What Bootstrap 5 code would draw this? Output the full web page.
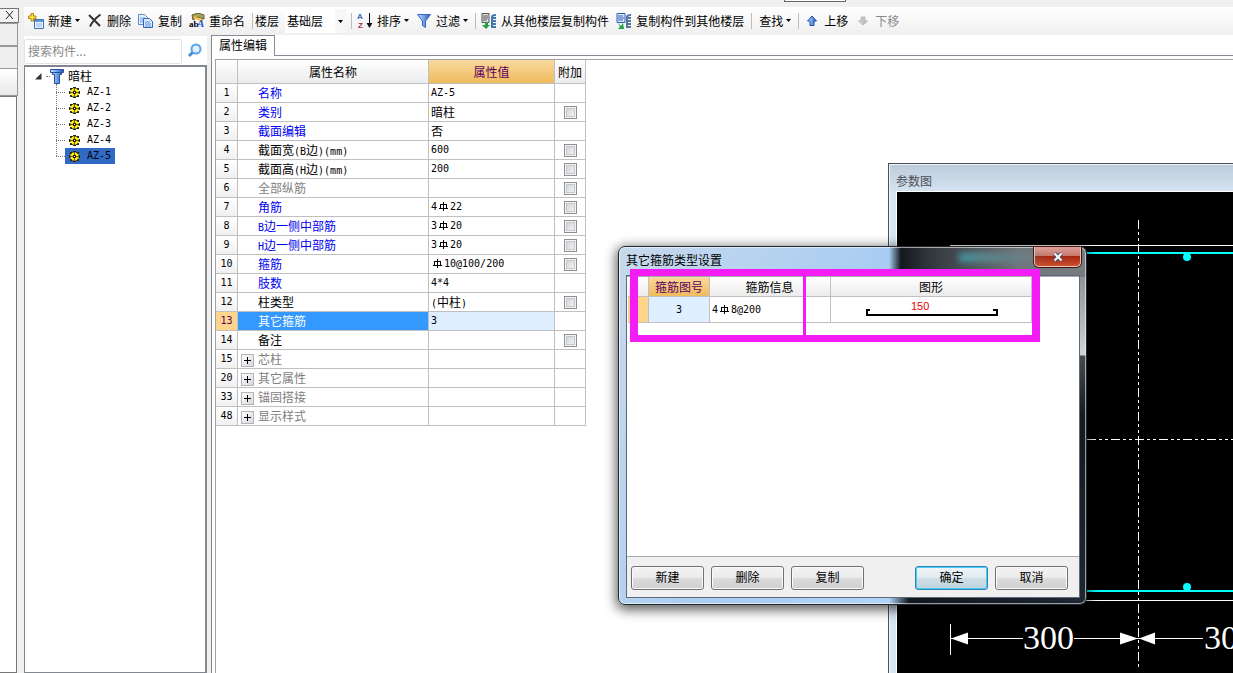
<!DOCTYPE html>
<html lang="zh-CN">
<head>
<meta charset="utf-8">
<meta name="viewport" content="width=device-width, initial-scale=1">
<title>属性编辑</title>
<link href="https://cdn.jsdelivr.net/npm/bootstrap@5.3.0/dist/css/bootstrap.min.css" rel="stylesheet">
<style>
body{font:12px/16px "Noto Sans CJK SC",sans-serif;color:#000;background:#f0f0f0;height:100vh;overflow:hidden;position:relative}
.mono{font-family:"DejaVu Sans Mono",monospace;font-size:10px}
span.mono{line-height:10px}
button{font:inherit;color:inherit}
/* left dock strip */
.dock{width:18px;flex:none}
.dock-x{width:19px;height:15px;margin-top:8px;border:1px solid #777;border-left:0;background:#f4f4f4;padding:0}
.dock-x svg{display:block;margin-left:5px}
.dock-cell{height:23px;border:1px solid #999;border-left:0;background:#efefef}
.dock-cell.tall{height:27px;border-top:0;background:linear-gradient(#fff,#e9e9e9)}
.dock-list{width:17px;background:#fff;border:1px solid #777;border-left:0}
.work{min-width:0;margin-left:2px}
/* toolbar */
.topband{height:7px;background:#f0f0f0;position:relative}
.topband i{position:absolute;left:764px;top:0;width:62px;height:2px;background:#fff;border:1px solid #666;border-top:0}
.tools{height:28px;background:linear-gradient(#fff,#efefef);padding-bottom:1px}
.tool{border:0;background:none;padding:0;margin-right:7px;gap:4px;white-space:nowrap;flex:none}
.tool:disabled{color:#8a8a8a}
.caret{width:5px;height:3px;flex:none;margin-left:-1px}
.vsep{width:1px;height:16px;background:#bdbdbd;margin-right:5px;flex:none}
.vsep.snug{margin-right:2px}
.vsep.wide{margin-right:7px}
.pick-label{margin-right:6px;flex:none}
.pick{appearance:none;border:0;border-radius:0;width:61px;height:24px;padding:0 2px;font:inherit;color:#000;margin-right:5px;flex:none;background:url("data:image/svg+xml,%3Csvg xmlns='http://www.w3.org/2000/svg' width='11' height='24'%3E%3Cpath fill='%23f7f7f7' d='M0 0h11v24H0z'/%3E%3Cpath d='M3 11h5L5.500 14z'/%3E%3C/svg%3E") right no-repeat #fff}
/* component tree */
.side{width:183px;flex:none;margin-top:1px}
.find-row{height:29px}
.find{width:158px;height:25px;border:1px solid #dfe3e8;border-radius:2px;margin-top:2px;padding:0 0 3px 3px;font:inherit;background:#fff}
.find::placeholder{color:#8a8a8a;opacity:1}
.look{border:0;background:none;padding:0;margin-left:5px}
.treebox{background:#fff;border:1px solid #838790;border-top-width:2px;border-right-width:2px;padding-top:1px}
.tree-root{height:16px;padding-left:10px}
.dots{width:4px;border-top:1px dotted #777}
.branch{list-style:none;margin:0 0 0 31px;padding:0;position:relative}
.branch::before{content:"";position:absolute;left:0;top:0;height:72px;border-left:1px dotted #777}
.branch li{height:16px}
.branch li::before{content:"";width:9px;border-top:1px dotted #777}
.leaf{color:#000;text-decoration:none;height:16px;padding:0 4px;gap:7px}
.leaf.on{background:#316ac5}
/* property editor */
.editor{border-left:1px solid #838790;margin-left:4px;background:#fff}
.tabs{height:21px;background:#fff}
.tabbtn{border:1px solid #8c8a98;border-width:1px 1px 0 0;background:#fff;padding:0 7px 2px;width:63px;white-space:nowrap}
.tabs-rest{border-bottom:1px solid #8c8a98}
.sheetbox{margin:3px 0 0 3px;border:1px solid #a0a0a0;border-width:1px 0 0 1px}
.grid{border-collapse:separate;border-spacing:0;table-layout:fixed}
.grid td,.grid th{border:solid #c0c0c0;border-width:0 1px 1px 0;padding:0;font-weight:400;white-space:nowrap;overflow:hidden}
.grid thead th{text-align:center;background:linear-gradient(#fff,#ececec)}
.grid thead th.hot{background:linear-gradient(#f9d99f,#efbb5c);color:#5c0060}
.grid tbody th{text-align:center;background:linear-gradient(#fff,#f0f0f0)}
.props{width:370px}
.props thead tr{height:24px}
.props tbody tr{height:19px}
.props td,.props tbody th{line-height:18px}
.props td:nth-child(2){padding-left:20px}
.props td:nth-child(3){padding-left:2px}
.props .key{color:#0000f0}
.props .dim{color:#808080}
.props td.group{padding-left:3px}
.props tr.cur th{background:#ffd58c;color:#5c0060}
.props tr.cur td:nth-child(2){background:#3399ff;color:#fff}
.props tr.cur td:nth-child(3){background:#e0efff}
.tick{appearance:none;width:13px;height:13px;border:1px solid #8e8f8f;background:linear-gradient(135deg,#cdd1d6,#f6f6f6);box-shadow:inset 0 0 0 1px #f4f4f4,inset 0 0 0 2px #c4c8cc;margin:0 auto;display:block}
.plus{width:13px;height:13px;border:1px solid #b5b5b5;background:linear-gradient(135deg,#fff,#d4d8de);padding:0;margin-right:4px;vertical-align:middle;display:inline-flex}
.rebar{vertical-align:-1px;margin:0 2px}
/* floating windows */
.chart-win{position:absolute;left:888px;top:163px;right:0;bottom:0;border:1px solid #4a4f55;border-width:1px 0 0 1px;background:#d7e4f2;padding-left:7px;box-shadow:inset 1px 1px #f3f8fd}
.chart-cap{height:28px;padding-top:8px;color:#4b4f56;margin-left:-7px;padding-left:6px;background:linear-gradient(#becbda,#d6e3f1);border-top:1px solid #eef4fa;border-left:1px solid #eef4fa}
.chart{background:#000;border:1px solid #fff;border-width:1px 0 0 1px;margin-top:-1px;overflow:hidden}
.chart svg{display:block}
.dlg{position:absolute;left:618px;top:246px;width:469px;border:1px solid #20262c;border-radius:7px;padding:0 6px 6px 7px;box-shadow:inset 0 0 0 1px #ffffff90,0 3px 12px 2px #000000a0;background:linear-gradient(90deg,#a9c9ea00 0 270px,#12181e 282px,#30363b 310px,#70757a 400px,#777c80 100%) 0 0/100% 30px no-repeat,linear-gradient(90deg,#0000 0 270px,#101821 290px,#1d2731 100%) 0 100%/100% 9px no-repeat,linear-gradient(#777c80,#d0d2d3 108px,#454b4e 109px,#131a20 170px,#1d2731) right 0/9px 100% no-repeat,linear-gradient(115deg,#c7d9ec,#a9cdf2 240px,#b8dafd)}
.dlg-cap{height:28px}
.dlg-title{padding-top:5px}
.dlg-glow{position:absolute;left:340px;top:6px;width:90px;height:9px;background:linear-gradient(90deg,#3fb8c8,#5d9ba4 30%,#7a9ba000);filter:blur(3px);opacity:.7}
.xbtn{width:47px;height:20px;margin-right:-1px;border:1px solid #e9c6c2;border-top:0;border-radius:0 0 5px 5px;box-shadow:0 0 0 1px #401410;background:linear-gradient(#dba29b,#c9756a 48%,#a92712 50%,#c8512f);padding:0;line-height:0}
.dlg-body{background:#f0f0f0;border:1px solid #5f6a76;position:relative}
.dlg-list{background:#fff;border-bottom:1px solid #a5a8b0;border-top:1px solid #a5a8b0;height:281px;padding-left:1px}
.bars{width:404px}
.bars tr:first-child{height:20px}
.bars tbody tr{height:26px}
.bars td:nth-child(2){background:#e0efff;text-align:center}
.bars td:nth-child(3){padding-left:2px}
.bars tbody th{background:#ffd58c}
.dlg-foot{gap:7px;padding:9px 11px 7px 4px;height:40px}
.wbtn{width:73px;height:24px;border:1px solid #707070;border-radius:3px;background:linear-gradient(#f3f3f3,#ebebeb 48%,#dcdcdc 50%,#cfcfcf);box-shadow:inset 0 0 0 1px #fbfbfb;padding:0 0 2px}
.wbtn.main{border-color:#3c7fb1;box-shadow:inset 0 0 0 1px #3fd0f8;background:linear-gradient(#eef5f8,#e0ecf0 48%,#cfdfe6 50%,#bfd3dc)}
.marker{position:absolute;left:3px;top:-7px;width:410px;height:73px;border:8px solid #f41cf4;border-width:7px 8px;pointer-events:none}
.marker::after{content:"";position:absolute;left:165px;top:0;bottom:0;width:3px;background:#f41cf4}
</style>
</head>
<body class="d-flex">
<svg width="0" height="0" class="position-absolute">
<defs>
<g id="gear"><path d="M4 0h3v11H4zM0 4h11v3H0zM1 1h3v2H1zM7 1h3v2H7zM1 8h3v2H1zM7 8h3v2H7z" fill="#222"/><circle cx="5.500" cy="5.500" r="4.300" fill="#ffee00"/><path d="M5 1h1v3H5zM5 7h1v3H5zM1 5h3v1H1zM7 5h3v1H7zM2 2h1v1H2zM8 2h1v1H8zM2 8h1v1H2zM8 8h1v1H8z" fill="#665c00"/><path d="M4 4h3v3H4z" fill="#222"/><path d="M5 5h1v1H5z" fill="#fff"/></g>
<path id="bar" d="M4 0h1v9H4zM1 2h7v1H1zM0 6h9v1H0zM1 2h1v5H1zM7 2h1v5H7z"/>
<path id="tri" d="M0 0h5L2.500 3z"/>
<linearGradient id="blu" x2="1" y2="0"><stop stop-color="#cfe4ff"/><stop offset=".5" stop-color="#6f9fe8"/><stop offset="1" stop-color="#1f4fae"/></linearGradient>
<linearGradient id="gry" x2="1" y2="0"><stop stop-color="#ddd"/><stop offset="1" stop-color="#aaa"/></linearGradient>
</defs></svg>

<aside class="dock d-flex flex-column">
<button class="dock-x" aria-label="关闭"><svg width="9" height="9"><path d="M1 0l7 8M8 0L1 8" stroke="#222"/></svg></button>
<div class="dock-cell"></div><div class="dock-cell"></div><div class="dock-cell tall"></div>
<div class="dock-list flex-grow-1"></div>
</aside>

<div class="work d-flex flex-column flex-grow-1">
<div class="topband"><i></i></div>
<div class="tools d-flex align-items-center ps-1 ms-1" role="toolbar">
<button class="tool d-flex align-items-center"><svg width="16" height="16"><path d="M6.500 6.500h9v9h-9z" fill="#eaf3ff" stroke="#3f72b5"/><path d="M7 7h8v2H7z" fill="#5d94dc"/><path d="M8 11h6M8 13h6" stroke="#8fb1de"/><path d="M3 .5h2.500V3H8v2.500H5.500V8H3V5.500H.5V3H3z" fill="#ffdf3d" stroke="#b08a12"/></svg>新建<svg class="caret"><use href="#tri"/></svg></button>
<button class="tool d-flex align-items-center"><svg width="16" height="16"><path d="M2 2l11 11M13.500 1.500Q6 7 3 13.500" stroke="#333" stroke-width="2" fill="none"/></svg>删除</button>
<button class="tool d-flex align-items-center"><svg width="16" height="16"><path d="M.5 1.500h6l3 3v7h-9z" fill="#e4f0ff" stroke="#5a8ac8"/><path d="M2 5h5M2 7h5M2 9h4" stroke="#6f9fdf"/><path d="M5.500 5.500h6l3 3v6h-9z" fill="#dbeaff" stroke="#2f66b3"/><path d="M7 9h5M7 11h6M7 13h6" stroke="#5d93df"/></svg>复制</button>
<button class="tool d-flex align-items-center"><svg width="16" height="16"><path d="M3 2l6-2 6 2v4L9 4 4 7z" fill="#a9a258" stroke="#665f2a"/><path d="M5 4l6 3 3 0" stroke="#f7bd43" stroke-width="2" fill="none"/><text x="0" y="14" font-size="9" font-family="Liberation Serif" font-weight="bold">ab</text><text x="8" y="14" font-size="11" font-family="Liberation Serif" font-weight="bold" font-style="italic" fill="#2258c8">A</text></svg>重命名</button>
<span class="vsep snug"></span>
<label for="floor" class="pick-label">楼层</label>
<select id="floor" class="pick"><option>基础层</option></select>
<span class="vsep"></span>
<button class="tool d-flex align-items-center"><svg width="16" height="17"><text x="0" y="7" font-size="8" font-weight="bold" font-family="Liberation Sans" fill="#3a6bb5">A</text><text x="1" y="16" font-size="8" font-weight="bold" font-family="Liberation Sans" fill="#a82c3c">Z</text><path d="M12.500 1v11" stroke="#111"/><path d="M9.500 11h6l-3 5z" fill="#111"/></svg>排序<svg class="caret"><use href="#tri"/></svg></button>
<button class="tool d-flex align-items-center"><svg width="16" height="16"><path d="M1.500 1.500h13L9.500 8v6.500l-3-2V8z" fill="url(#blu)" stroke="#3a68c0"/></svg>过滤<svg class="caret"><use href="#tri"/></svg></button>
<span class="vsep"></span>
<button class="tool d-flex align-items-center"><svg width="16" height="16"><path d="M1 .5h7v9H1z" fill="#e0e0e0" stroke="#555"/><path d="M2 3h5M2 5h5M2 7h4" stroke="#555"/><path d="M15 2q-4 0-4 2v11M11 5h4M11 8h4M11 11h4M11 14h4" stroke="#3f78b0" stroke-width="2" fill="none"/><path d="M4 9v3H1l4 4 4-4H7V9z" fill="#22a040"/></svg>从其他楼层复制构件</button>
<button class="tool d-flex align-items-center"><svg width="16" height="16"><path d="M1 .5h8v9H1z" fill="#dce8fb" stroke="#2c5fb8"/><path d="M2 3h5M2 5h6M2 7h5" stroke="#2c5fb8"/><path d="M15 2q-4 0-4 2v11M11 5h4M11 8h4M11 11h4M11 14h4" stroke="#55789b" stroke-width="2" fill="none"/><path d="M2 10l3 3 2-3 1 6H2l2-2z" fill="#22a040"/></svg>复制构件到其他楼层</button>
<span class="vsep wide"></span>
<button class="tool d-flex align-items-center">查找<svg class="caret"><use href="#tri"/></svg></button>
<span class="vsep"></span>
<button class="tool d-flex align-items-center"><svg width="16" height="16"><path d="M8 3l4.500 5H10v4.500H6V8H3.500z" fill="url(#blu)" stroke="#1d4db0"/></svg>上移</button>
<button class="tool d-flex align-items-center" disabled><svg width="16" height="16"><path d="M8 12L3.500 8H6V4h4v4h2.500z" fill="url(#gry)" stroke="#bbb"/></svg>下移</button>
</div>

<div class="d-flex flex-grow-1">
<section class="side d-flex flex-column ms-1">
<div class="find-row d-flex align-items-center bg-white"><input class="find" type="text" placeholder="搜索构件..." aria-label="搜索构件"><button class="look" aria-label="搜索"><svg width="16" height="16"><circle cx="9" cy="6" r="4.500" fill="#dff0ff" stroke="#5aa5e6" stroke-width="2"/><path d="M5.500 9.500L2 13" stroke="#4a8fd0" stroke-width="3"/></svg></button></div>
<div class="treebox flex-grow-1">
<div class="tree-root d-flex align-items-center"><svg width="7" height="7"><path d="M6.500 0v6.500H0z" fill="#333"/></svg><span class="dots ms-1"></span><svg width="14" height="15" class="flex-shrink-0"><path d="M.5.500h13v3h-2v2h-2v9h-5v-9h-2v-2h-2z" fill="url(#blu)" stroke="#284fa0"/><path d="M1 3.500h12" stroke="#284fa0"/></svg><span class="ps-1">暗柱</span></div>
<ul class="branch">
<li class="d-flex align-items-center"><a class="leaf d-flex align-items-center" href="#"><svg width="11" height="11"><use href="#gear"/></svg><span class="mono">AZ-1</span></a></li>
<li class="d-flex align-items-center"><a class="leaf d-flex align-items-center" href="#"><svg width="11" height="11"><use href="#gear"/></svg><span class="mono">AZ-2</span></a></li>
<li class="d-flex align-items-center"><a class="leaf d-flex align-items-center" href="#"><svg width="11" height="11"><use href="#gear"/></svg><span class="mono">AZ-3</span></a></li>
<li class="d-flex align-items-center"><a class="leaf d-flex align-items-center" href="#"><svg width="11" height="11"><use href="#gear"/></svg><span class="mono">AZ-4</span></a></li>
<li class="d-flex align-items-center"><a class="leaf on d-flex align-items-center" href="#"><svg width="11" height="11"><use href="#gear"/></svg><span class="mono">AZ-5</span></a></li>
</ul>
</div>
</section>

<main class="editor flex-grow-1 d-flex flex-column">
<div class="tabs d-flex"><button class="tabbtn">属性编辑</button><div class="tabs-rest flex-grow-1"></div></div>
<div class="sheetbox flex-grow-1">
<table class="grid props">
<colgroup><col style="width:22px"><col style="width:191px"><col style="width:126px"><col style="width:31px"></colgroup>
<thead><tr><th></th><th>属性名称</th><th class="hot">属性值</th><th>附加</th></tr></thead>
<tbody>
<tr><th class="mono">1</th><td class="key">名称</td><td class="mono">AZ-5</td><td></td></tr>
<tr><th class="mono">2</th><td class="key">类别</td><td>暗柱</td><td><input class="tick" type="checkbox" aria-label="类别附加"></td></tr>
<tr><th class="mono">3</th><td class="key">截面编辑</td><td>否</td><td></td></tr>
<tr><th class="mono">4</th><td>截面宽<span class="mono">(B</span>边<span class="mono">)(mm)</span></td><td class="mono">600</td><td><input class="tick" type="checkbox" aria-label="截面宽附加"></td></tr>
<tr><th class="mono">5</th><td>截面高<span class="mono">(H</span>边<span class="mono">)(mm)</span></td><td class="mono">200</td><td><input class="tick" type="checkbox" aria-label="截面高附加"></td></tr>
<tr><th class="mono">6</th><td class="dim">全部纵筋</td><td></td><td><input class="tick" type="checkbox" aria-label="全部纵筋附加"></td></tr>
<tr><th class="mono">7</th><td class="key">角筋</td><td class="mono">4<svg class="rebar" width="9" height="9"><use href="#bar"/></svg>22</td><td><input class="tick" type="checkbox" aria-label="角筋附加"></td></tr>
<tr><th class="mono">8</th><td class="key"><span class="mono">B</span>边一侧中部筋</td><td class="mono">3<svg class="rebar" width="9" height="9"><use href="#bar"/></svg>20</td><td><input class="tick" type="checkbox" aria-label="B边一侧中部筋附加"></td></tr>
<tr><th class="mono">9</th><td class="key"><span class="mono">H</span>边一侧中部筋</td><td class="mono">3<svg class="rebar" width="9" height="9"><use href="#bar"/></svg>20</td><td><input class="tick" type="checkbox" aria-label="H边一侧中部筋附加"></td></tr>
<tr><th class="mono">10</th><td class="key">箍筋</td><td class="mono"><svg class="rebar" width="9" height="9"><use href="#bar"/></svg>10@100/200</td><td><input class="tick" type="checkbox" aria-label="箍筋附加"></td></tr>
<tr><th class="mono">11</th><td class="key">肢数</td><td class="mono">4*4</td><td></td></tr>
<tr><th class="mono">12</th><td>柱类型</td><td><span class="mono">(</span>中柱<span class="mono">)</span></td><td><input class="tick" type="checkbox" aria-label="柱类型附加"></td></tr>
<tr class="cur"><th class="mono">13</th><td>其它箍筋</td><td class="mono">3</td><td></td></tr>
<tr><th class="mono">14</th><td>备注</td><td></td><td><input class="tick" type="checkbox" aria-label="备注附加"></td></tr>
<tr><th class="mono">15</th><td class="dim group"><button class="plus" aria-label="展开芯柱"><svg width="11" height="11"><path d="M2 5.500h7M5.500 2v7" stroke="#000"/></svg></button>芯柱</td><td></td><td></td></tr>
<tr><th class="mono">20</th><td class="dim group"><button class="plus" aria-label="展开其它属性"><svg width="11" height="11"><path d="M2 5.500h7M5.500 2v7" stroke="#000"/></svg></button>其它属性</td><td></td><td></td></tr>
<tr><th class="mono">33</th><td class="dim group"><button class="plus" aria-label="展开锚固搭接"><svg width="11" height="11"><path d="M2 5.500h7M5.500 2v7" stroke="#000"/></svg></button>锚固搭接</td><td></td><td></td></tr>
<tr><th class="mono">48</th><td class="dim group"><button class="plus" aria-label="展开显示样式"><svg width="11" height="11"><path d="M2 5.500h7M5.500 2v7" stroke="#000"/></svg></button>显示样式</td><td></td><td></td></tr>
</tbody>
</table>
</div>
</main>
</div>
</div>

<section class="chart-win d-flex flex-column">
<div class="chart-cap">参数图</div>
<div class="chart flex-grow-1">
<svg width="500" height="481">
<g fill="none" stroke="#fff" shape-rendering="crispEdges">
<path d="M241.500 28v447M190 247.500h310" stroke-dasharray="9 3 3 3 3 3"/>
<path d="M53 53.500h447M53 408.500h447M53.500 432v31M54 446.500h72M177 446.500h129"/>
</g>
<path d="M66 61h434M66 399h434" stroke="#00ffff" stroke-width="2"/>
<circle cx="290" cy="65" r="4" fill="#00ffff"/><circle cx="290" cy="395" r="4" fill="#00ffff"/>
<path d="M54 446.500l17-6v12zM241 446.500l-18-6v12zM242 446.500l16-6v12z" fill="#fff"/>
<g fill="#fff" font-family="Liberation Serif" font-size="34"><text x="126" y="457">300</text><text x="307" y="457">300</text></g>
</svg>
</div>
</section>

<section class="dlg" role="dialog" aria-label="其它箍筋类型设置">
<div class="dlg-glow"></div>
<div class="dlg-cap d-flex justify-content-between"><span class="dlg-title">其它箍筋类型设置</span><button class="xbtn" aria-label="关闭"><svg width="12" height="10"><path d="M2.500 1.500l7 7M9.500 1.500l-7 7" stroke="#4a4f66" stroke-width="4"/><path d="M2.500 1.500l7 7M9.500 1.500l-7 7" stroke="#fff" stroke-width="2"/></svg></button></div>
<div class="dlg-body">
<div class="dlg-list">
<table class="grid bars">
<colgroup><col style="width:21px"><col style="width:61px"><col style="width:96px"><col style="width:25px"><col style="width:201px"></colgroup>
<thead><tr><th></th><th class="hot">箍筋图号</th><th class="ps-4">箍筋信息</th><th></th><th>图形</th></tr></thead>
<tbody><tr><th></th><td class="mono">3</td><td class="mono">4<svg class="rebar" width="9" height="9"><use href="#bar"/></svg>8@200</td><td></td><td><svg class="d-block" width="200" height="25"><path d="M39 13h-3v5h130v-5h-4" fill="none" stroke="#000" stroke-width="2" shape-rendering="crispEdges"/><text x="80" y="13" font-size="11" fill="#f00000" font-family="Liberation Sans">150</text></svg></td></tr></tbody>
</table>
</div>
<div class="dlg-foot d-flex"><button class="wbtn">新建</button><button class="wbtn">删除</button><button class="wbtn me-auto">复制</button><button class="wbtn main">确定</button><button class="wbtn">取消</button></div>
<div class="marker"></div>
</div>
</section>
<script src="https://cdn.jsdelivr.net/npm/bootstrap@5.3.0/dist/js/bootstrap.bundle.min.js"></script>
</body>
</html>
